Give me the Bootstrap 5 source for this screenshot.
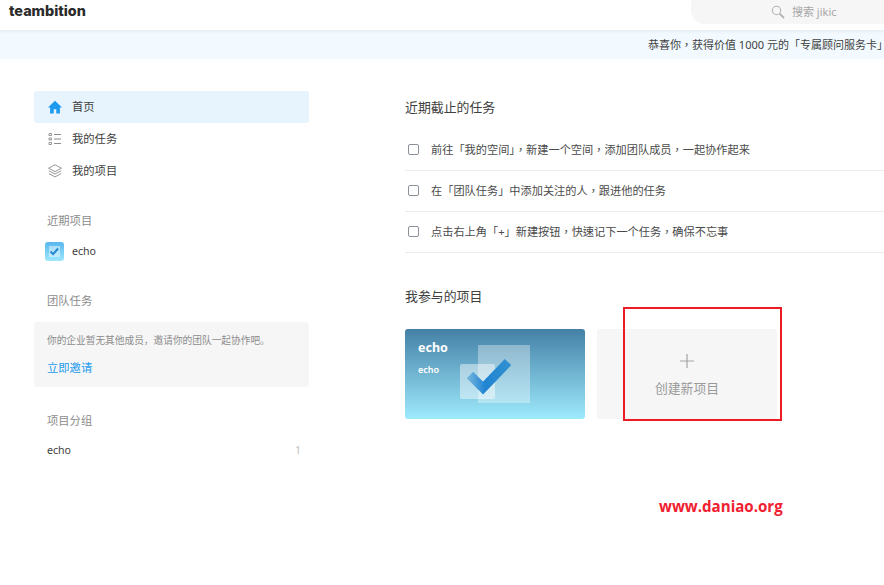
<!DOCTYPE html>
<html lang="zh-CN">
<head>
<meta charset="utf-8">
<title>teambition</title>
<link href="https://cdn.jsdelivr.net/npm/bootstrap@5.3.0/dist/css/bootstrap.min.css" rel="stylesheet">
<style>
html,body{height:585px;overflow:hidden}
body{font-family:"Noto Sans","Noto Sans CJK SC",sans-serif;font-size:11.3px;color:#404040;background:#fff;position:relative}
.tb-head{height:30px;box-shadow:0 1px 4px rgba(0,0,0,.08);position:relative;z-index:2;background:#fff}
.tb-logo{margin-left:9px;font-family:"Inter",sans-serif;font-size:14.4px;font-weight:800;color:#2b2b2b;line-height:22px}
.tb-search{position:absolute;left:691px;right:0;top:0;height:24px;background:#f6f6f6;border-radius:0 0 0 14px;padding-left:80px;color:#a6a6a6;gap:7px;font-size:11px}
.tb-banner{height:29px;background:#f2faff;padding-left:648px;white-space:nowrap;overflow:hidden;line-height:30px;color:#404040;font-family:"Noto Sans","Noto Sans CJK TC",sans-serif;font-size:11px}
.tb-side{width:275px;margin-left:34px;padding-top:32px;flex:none}
.tb-item{height:32px;border-radius:3px;padding-left:14px;gap:10px}
.tb-item.on{background:#e7f4fd}
.tb-ico{width:14px;height:14px;flex:none}
.tb-label{color:#8c8c8c;line-height:16px;padding-left:13px}
.tb-invite{background:#f6f6f6;border-radius:3px;height:65px;padding:11px 13px 0;margin-top:13px}
.tb-invite p{font-size:9.7px;color:#8c8c8c;margin:0 0 9px;line-height:16px;white-space:nowrap}
.tb-invite a{color:#1b9aee;text-decoration:none;line-height:20px;display:block}
.tb-echo{font-size:10.6px}
.tb-main{margin-left:96px;padding-top:38px;flex:1;min-width:0}
.tb-title{font-size:12.9px;font-weight:400;line-height:20px;color:#404040;margin:0}
.tb-task{height:41px;border-bottom:1px solid #ececec;gap:12px;padding-left:3px;white-space:nowrap;font-size:11.2px;color:#4a4a4a;font-family:"Noto Sans","Noto Sans CJK TC",sans-serif}
.tb-check{width:11px;height:11px;border:1px solid #8a9199;border-radius:2px;flex:none;margin-top:-1px}
.tb-cards{gap:12px;margin-top:23px}
.tb-proj{width:180px;height:90px;border-radius:3px;background:linear-gradient(180deg,#4480a6,#9eeafd);position:relative;overflow:hidden;color:#fff;padding:10px 13px}
.tb-proj b{display:block;font-size:12.5px;line-height:18px}
.tb-proj span{display:block;font-size:9px;line-height:14px;margin-top:6px;font-weight:600}
.tb-art{position:absolute;left:0;top:0}
.tb-new{width:180px;height:90px;border-radius:3px;background:#f6f6f6;color:#999;font-size:12.8px;padding-top:25px}
.tb-red{position:absolute;left:623px;top:307px;width:159px;height:114px;border:2px solid #ed1c24}
.tb-mark{position:absolute;left:659px;top:496px;font-family:"Open Sans",sans-serif;font-weight:700;font-size:15.1px;color:#f02030;line-height:20px}
</style>
</head>
<body>
<header class="tb-head d-flex align-items-start">
  <div class="tb-logo">teambition</div>
  <div class="tb-search d-flex align-items-center">
    <svg width="14" height="14" viewBox="0 0 14 14" fill="none" stroke="#b3b3b3"><circle cx="5.5" cy="5.5" r="4.2" stroke-width="1.1"/><path d="M8.6 8.6l4.4 4.4" stroke-width="1.8"/></svg>
    <span>搜索 jikic</span>
  </div>
</header>
<div class="tb-banner" lang="zh-TW">恭喜你，获得价值 1000 元的「专属顾问服务卡」</div>
<div class="d-flex">
  <aside class="tb-side">
    <div class="tb-item on d-flex align-items-center">
      <svg class="tb-ico" viewBox="0 0 14 14"><path fill="#1b9aee" d="M7 .8L0 7.4h2.1V13.4h3.6V9.2h2.6v4.2h3.6V7.4H14z"/></svg>
      <span>首页</span>
    </div>
    <div class="tb-item d-flex align-items-center">
      <svg class="tb-ico" viewBox="0 0 14 14" fill="none" stroke="#8c8c8c"><path d="M6 2.5h7M6 7h7M6 11.5h7"/><path d="M1 1.5h2.5v2H1zM1 6h2.5v2H1zM1 10.5h2.5v2H1z" stroke-width=".9"/></svg>
      <span>我的任务</span>
    </div>
    <div class="tb-item d-flex align-items-center">
      <svg class="tb-ico" viewBox="0 0 14 14" fill="none" stroke="#8c8c8c" stroke-width=".9"><path d="M7 .8l6.5 3.4L7 7.6.5 4.2z"/><path d="M.8 6.8L7 10l6.2-3.2M.8 9.6L7 12.9l6.2-3.3"/></svg>
      <span>我的项目</span>
    </div>
    <div class="tb-label" style="margin-top:26px">近期项目</div>
    <div class="d-flex align-items-center" style="margin-top:13px;padding-left:11px;gap:8px">
      <svg width="19" height="19" viewBox="0 0 19 19" style="flex:none"><defs><linearGradient id="g1" x1="0" y1="0" x2="0" y2="1"><stop offset="0" stop-color="#58b6ee"/><stop offset="1" stop-color="#9ee8fd"/></linearGradient></defs><rect width="19" height="19" rx="3" fill="url(#g1)"/><rect x="4" y="4" width="11" height="11" fill="#fff" opacity=".45"/><path d="M5.5 9.5l2.6 2.6 5-5.6" fill="none" stroke="#2486d2" stroke-width="2"/></svg>
      <span class="tb-echo">echo</span>
    </div>
    <div class="tb-label" style="margin-top:32px">团队任务</div>
    <div class="tb-invite">
      <p>你的企业暂无其他成员，邀请你的团队一起协作吧。</p>
      <a href="#">立即邀请</a>
    </div>
    <div class="tb-label" style="margin-top:26px">项目分组</div>
    <div class="tb-echo d-flex justify-content-between" style="margin-top:13px;padding:0 8px 0 13px;line-height:16px">
      <span>echo</span><span style="color:#bfbfbf">1</span>
    </div>
  </aside>
  <main class="tb-main">
    <h2 class="tb-title">近期截止的任务</h2>
    <div style="margin-top:13px" lang="zh-TW">
      <div class="tb-task d-flex align-items-center"><span class="tb-check"></span><span>前往「我的空间」，新建一个空间，添加团队成员，一起协作起来</span></div>
      <div class="tb-task d-flex align-items-center"><span class="tb-check"></span><span>在「团队任务」中添加关注的人，跟进他的任务</span></div>
      <div class="tb-task d-flex align-items-center"><span class="tb-check"></span><span>点击右上角「+」新建按钮，快速记下一个任务，确保不忘事</span></div>
    </div>
    <h2 class="tb-title" style="margin-top:33px">我参与的项目</h2>
    <div class="tb-cards d-flex">
      <div class="tb-proj">
        <svg class="tb-art" width="180" height="90" viewBox="0 0 180 90">
          <defs><linearGradient id="g2" x1="0" y1="0" x2="1" y2="0"><stop offset="0" stop-color="#6aaedc"/><stop offset=".4" stop-color="#2184d2"/><stop offset="1" stop-color="#2f8fd0"/></linearGradient></defs>
          <rect x="73" y="16" width="52" height="58" fill="#fff" opacity=".35"/>
          <rect x="55" y="35" width="35" height="35" rx="2" fill="#fff" opacity=".45"/>
          <path d="M65 46l13 13 25-26" fill="none" stroke="url(#g2)" stroke-width="9"/>
        </svg>
        <div class="position-relative"><b>echo</b><span>echo</span></div>
      </div>
      <div class="tb-new d-flex flex-column align-items-center">
        <svg width="14" height="14" viewBox="0 0 14 14" fill="none" stroke="#a6a6a6" stroke-width="1.2"><path d="M7 0v14M0 7h14"/></svg>
        <span style="margin-top:11px">创建新项目</span>
      </div>
    </div>
  </main>
</div>
<div class="tb-red"></div>
<div class="tb-mark">www.daniao.org</div>
<script src="https://cdn.jsdelivr.net/npm/bootstrap@5.3.0/dist/js/bootstrap.bundle.min.js"></script>
</body>
</html>
